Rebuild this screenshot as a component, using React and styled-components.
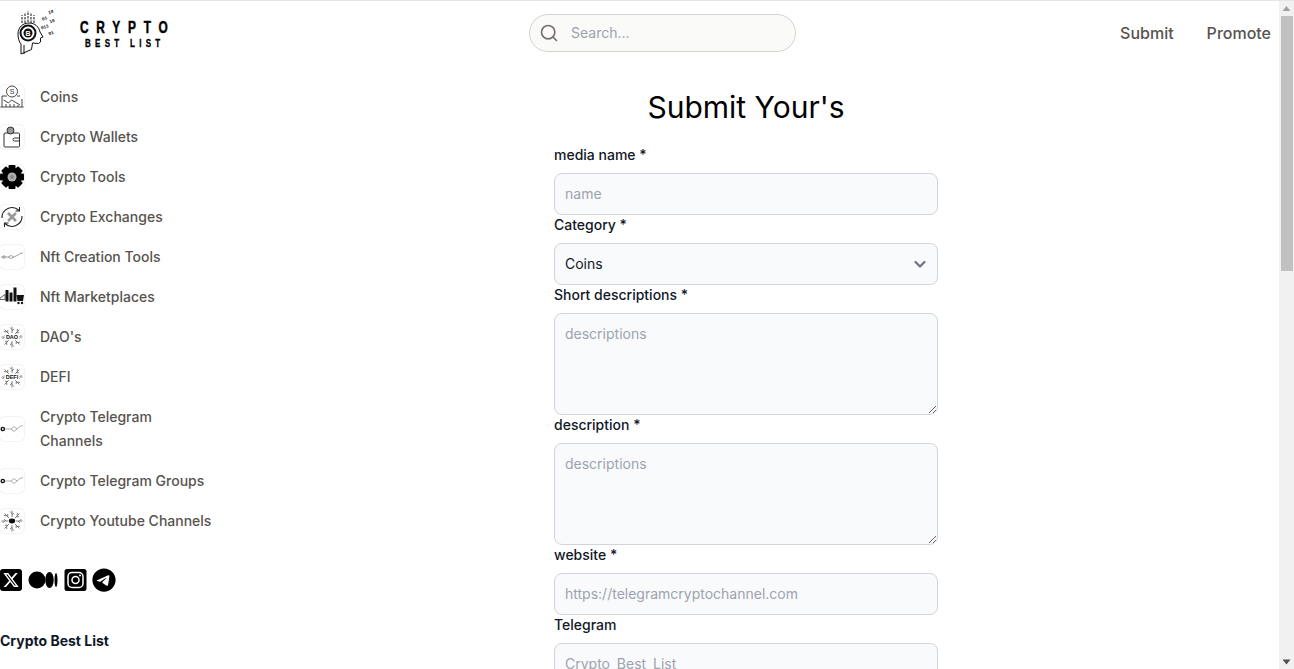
import React from 'react'
import styled, { createGlobalStyle } from 'styled-components'
import { Search } from 'lucide-react'
import { FaTelegram } from 'react-icons/fa6'

const chevron = `url("data:image/svg+xml,%3Csvg xmlns='http://www.w3.org/2000/svg' fill='none' viewBox='0 0 20 20'%3E%3Cpath stroke='%236b7280' stroke-linecap='round' stroke-linejoin='round' stroke-width='2.2' d='M5.500 8l4.500 4.500 4.500-4.500'/%3E%3C/svg%3E")`

const GlobalStyle = createGlobalStyle`
  * { box-sizing: border-box; }
  html, body { height: 100%; margin: 0; overflow: hidden; }
  body {
    border-top: 1px solid #e5e5e5;
    background: #fff;
    font-family: Inter, "Liberation Sans", sans-serif;
    font-size: 14px;
    line-height: 24px;
  }
  #root { height: 100%; }
`

const Shell = styled.div`
  display: flex;
  height: 100%;
`

const Content = styled.div`
  flex: 1;
  min-width: 0;
  overflow: hidden;
`

const ScrollBar = styled.div`
  flex: 0 0 15px;
  display: flex;
  flex-direction: column;
  background: #f1f1f1;
`

const ScrollArrow = styled.svg`
  display: block;
  flex: 0 0 15px;
  width: 15px;
  height: 15px;
  fill: ${p => p.$color};
`

const ScrollThumb = styled.div`
  flex: 0 0 255px;
  margin-left: 2px;
  margin-right: 1px;
  background: #c1c1c1;
`

const ScrollRest = styled.div`
  flex: 1;
`

const Header = styled.header`
  display: flex;
  align-items: center;
  justify-content: space-between;
  height: 64px;
  padding-right: 8px;
`

const LogoBox = styled.a`
  flex: 0 0 205px;
`

const LogoSvg = styled.svg`
  display: block;
  width: 170px;
  height: 50px;
`

const SearchBox = styled.label`
  display: flex;
  align-items: center;
  gap: 12px;
  width: 267px;
  height: 38px;
  padding: 0 12px 0 9px;
  border: 1px solid #d6d3d1;
  border-radius: 999px;
  background: #fafaf9;
  color: #78716c;

  input {
    flex: 1;
    min-width: 0;
    border: 0;
    outline: 0;
    padding: 0;
    background: transparent;
    font: inherit;
    color: #111827;
  }
  input::placeholder { color: #9ca3af; opacity: 1; }
`

const TopNav = styled.nav`
  display: flex;
  gap: 33px;
`

const TopLink = styled.a`
  font-size: 16px;
  font-weight: 500;
  color: #57534e;
`

const Columns = styled.div`
  display: flex;
  align-items: flex-start;
`

const Sidebar = styled.aside`
  flex: 0 0 213px;
  width: 213px;
  padding-top: 12px;
`

const NavItem = styled.a`
  display: flex;
  align-items: center;
  gap: 16px;
  padding: 8px 0;
  font-weight: 500;
  color: #57534e;
`

const Tile = styled.span`
  flex: 0 0 24px;
  width: 24px;
  height: 24px;
  border-radius: 5px;
  box-shadow: 0 0 0 1px #f3f3f3;
  background: #fff;

  svg { display: block; width: 24px; height: 24px; }
`

const Socials = styled.div`
  display: flex;
  align-items: center;
  gap: 4px;
  margin-top: 27px;
  color: #000;

  svg { display: block; }
`

const BrandName = styled.h4`
  margin: 37px 0 0;
  font-size: 14px;
  line-height: 24px;
  font-weight: 700;
  color: #111827;
`

const Main = styled.main`
  flex: 1;
  padding-top: 24px;
`

const Title = styled.h1`
  margin: 0 0 20px;
  font-size: 30px;
  line-height: 36px;
  font-weight: 400;
  text-align: center;
  color: #000;
`

const Form = styled.form`
  width: 384px;
  margin: 0 auto;
`

const Label = styled.label`
  display: block;
  margin-bottom: 8px;
  font-size: 14px;
  line-height: 20px;
  font-weight: 500;
  color: #111827;
`

const fieldCss = `
  display: block;
  width: 100%;
  padding: 10px;
  border: 1px solid #d1d5db;
  border-radius: 8px;
  background-color: #f9fafb;
  font: inherit;
  font-size: 14px;
  line-height: 20px;
  color: #111827;
  outline: 0;
  &::placeholder { color: #9ca3af; opacity: 1; }
`

const Input = styled.input`
  ${fieldCss}
  height: 42px;
  padding: 9px 10px 11px;
`

const Select = styled.select`
  ${fieldCss}
  height: 42px;
  appearance: none;
  background-image: ${chevron};
  background-repeat: no-repeat;
  background-position: right 7px center;
  background-size: 20px 20px;
`

const TextArea = styled.textarea`
  ${fieldCss}
  height: 102px;
`

const Strand = () => (
  <g fill="none" stroke="#8a8a8a" strokeWidth=".8">
    <path d="M1 12h7l3-1.500 3 1.500 4-2 2-1.500 3-.5" />
    <path d="M8 12l3 1.500 3-1.500" />
    <circle cx="4" cy="12" r="1.300" />
  </g>
)

const TelegramStrand = () => (
  <g fill="none" stroke="#9a9a9a" strokeWidth=".8">
    <path d="M5 12h6l3-2.500 3 2.500 3-2.500 3-1" />
    <path d="M11 12l3 2.500 3-2.500" />
    <circle cx="2.800" cy="12" r="1.600" stroke="#111" strokeWidth="1.400" />
  </g>
)

const Hub = ({ label, dark }) => (
  <g fill="none" stroke="#555" strokeWidth=".7">
    {[0, 45, 90, 135, 180, 225, 270, 315].map(a => (
      <path key={a} transform={`rotate(${a} 12 12)`} d="M12 8V1.500m0 3l-2-2m2 3.500l2-2" />
    ))}
    {dark ? (
      <ellipse cx="12" cy="12" rx="3.200" ry="2.400" fill="#111" stroke="none" />
    ) : (
      <>
        <rect x="4.500" y="8.800" width="15" height="6.400" fill="#fff" stroke="none" />
        <text x="12" y="14" fontSize="5.500" fontWeight="700" fill="#111" stroke="none" textAnchor="middle" fontFamily="Liberation Sans">{label}</text>
      </>
    )}
  </g>
)

const icons = {
  coins: (
    <g fill="none" stroke="#333" strokeWidth=".9">
      <circle cx="12" cy="6.500" r="5.500" />
      <text x="12" y="9" fontSize="7" fill="#333" stroke="none" textAnchor="middle" fontFamily="Liberation Sans">S</text>
      <path d="M.5 22h23M2 22V11h5M22 22v-8M17 11h3" />
      <path d="M3.500 15l5 3 3-3 3.500 2 5 3" />
      <path d="M6 22v-3M10 22v-3M14 22v-3M18 22v-2" />
    </g>
  ),
  wallet: (
    <g fill="none" stroke="#333" strokeWidth="1">
      <rect x="4" y="8" width="15.500" height="14" rx="1" />
      <circle cx="10.500" cy="5.500" r="3.500" fill="#999" />
      <path d="M19.500 13h-5a1.500 1.500 0 0 0 0 3h5" />
    </g>
  ),
  gear: (
    <g>
      {[0, 45, 90, 135].map(a => (
        <rect key={a} x="8.500" y="0" width="7" height="24" rx="1" fill="#000" transform={`rotate(${a} 12 12)`} />
      ))}
      <circle cx="12" cy="12" r="9.500" fill="#000" />
      <circle cx="12" cy="12" r="4.500" fill="#b0b0b0" />
      <circle cx="12" cy="12" r="2" fill="#8a8a8a" />
    </g>
  ),
  exchange: (
    <g fill="none" stroke="#222" strokeWidth="1.100">
      <path d="M2 13a10 10 0 0 1 17-7.500M22 11a10 10 0 0 1-17 7.500" />
      <path d="M19.500 2v4h-4M4.500 22v-4h4" />
      <path d="M8 8l8 8M16 8l-8 8" stroke="#999" strokeWidth="2.600" />
    </g>
  ),
  strand: <Strand />,
  market: (
    <g fill="#111">
      <path d="M0 13l5-3.500v5H0z" fill="none" stroke="#444" strokeWidth=".8" />
      <rect x="5.500" y="5" width="3" height="11.500" />
      <rect x="9.500" y="7.500" width="3" height="9" />
      <rect x="13.500" y="2.500" width="3" height="14" />
      <path d="M16.500 10h7.500l-1 6h-5.500z" />
      <circle cx="18.500" cy="18" r="1.200" />
      <circle cx="22" cy="18" r="1.200" />
    </g>
  ),
  dao: <Hub label="DAO" />,
  defi: <Hub label="DEFI" />,
  telegram: <TelegramStrand />,
  youtube: <Hub dark />,
}

const categories = [
  ['Coins', 'coins'],
  ['Crypto Wallets', 'wallet'],
  ['Crypto Tools', 'gear'],
  ['Crypto Exchanges', 'exchange'],
  ['Nft Creation Tools', 'strand'],
  ['Nft Marketplaces', 'market'],
  ["DAO's", 'dao'],
  ['DEFI', 'defi'],
  ['Crypto Telegram Channels', 'telegram'],
  ['Crypto Telegram Groups', 'telegram'],
  ['Crypto Youtube Channels', 'youtube'],
]

const Logo = () => (
  <LogoSvg viewBox="0 8 170 50">
    <g fill="none" stroke="#111" strokeWidth="1">
      <path d="M21 54V44c-2-2-3-6-3-10 0-7 5-11 11-11 6 0 10 4 11 9l3 5-2.500 1v4l-2 1.500-6-.5-1 6.500z" />
      <path d="M24 54V45" />
      <circle cx="28" cy="33" r="7.500" strokeWidth="2" />
      <path d="M22 23v-8M25 23V13M28 22V11M31 23V13M34 23v-8" strokeDasharray="2.500 1" />
    </g>
    <circle cx="28" cy="33" r="4.500" fill="#111" />
    <text x="28" y="35.500" fontSize="7" fontWeight="700" fill="#fff" textAnchor="middle" fontFamily="Liberation Sans">B</text>
    <g fontSize="4.500" fontWeight="700" fill="#222" fontFamily="Liberation Mono" transform="rotate(-20 48 24)">
      <text x="44" y="19">01</text>
      <text x="52" y="15">10</text>
      <text x="40" y="27">011</text>
      <text x="50" y="24">10</text>
      <text x="45" y="35">01</text>
    </g>
    <text transform="translate(80 33) scale(.72 1)" fontSize="16.500" fontWeight="700" fill="#000" stroke="#000" strokeWidth=".5" textLength="122" fontFamily="Liberation Sans">CRYPTO</text>
    <text transform="translate(85 47) scale(.8 1)" fontSize="10" fontWeight="700" fill="#000" stroke="#000" strokeWidth=".3" textLength="94" fontFamily="Liberation Sans">BEST LIST</text>
  </LogoSvg>
)

const XIcon = () => (
  <svg width="24" height="24" viewBox="0 0 24 24">
    <rect x="0" y="1" width="22" height="22" rx="3" />
    <path
      fill="#fff"
      transform="translate(2.500 3.500) scale(.71)"
      d="M18.244 2.250h3.308l-7.227 8.260 8.502 11.240H16.170l-5.214-6.817L4.990 21.750H1.680l7.730-8.835L1.254 2.250H8.080l4.713 6.231zm-1.161 17.520h1.833L7.084 4.126H5.117z"
    />
  </svg>
)

const MediumIcon = () => (
  <svg width="32" height="24" viewBox="0 0 32 24">
    <ellipse cx="9" cy="12" rx="8.500" ry="8.500" />
    <ellipse cx="21.500" cy="12" rx="4.200" ry="8" />
    <ellipse cx="28" cy="12" rx="1.500" ry="7" />
  </svg>
)

const InstagramIcon = () => (
  <svg width="24" height="24" viewBox="0 0 24 24">
    <rect x="0.500" y="1" width="22" height="22" rx="2.500" />
    <g fill="none" stroke="#fff" strokeWidth="1.500">
      <rect x="4" y="4.500" width="15" height="15" rx="4" />
      <circle cx="11.500" cy="12" r="3.500" />
    </g>
    <circle cx="16" cy="7.500" r="1" fill="#fff" />
  </svg>
)

const App = () => (
  <Shell>
    <GlobalStyle />
    <Content>
      <Header>
        <LogoBox>
          <Logo />
        </LogoBox>
        <SearchBox>
          <Search size={20} strokeWidth={2} />
          <input placeholder="Search..." />
        </SearchBox>
        <TopNav>
          <TopLink>Submit</TopLink>
          <TopLink>Promote</TopLink>
        </TopNav>
      </Header>
      <Columns>
        <Sidebar>
          {categories.map(([name, icon]) => (
            <NavItem key={name}>
              <Tile>
                <svg viewBox="0 0 24 24">{icons[icon]}</svg>
              </Tile>
              <span>{name}</span>
            </NavItem>
          ))}
          <Socials>
            <XIcon />
            <MediumIcon />
            <InstagramIcon />
            <FaTelegram size={24} />
          </Socials>
          <BrandName>Crypto Best List</BrandName>
        </Sidebar>
        <Main>
          <Title>Submit Your's</Title>
          <Form>
            <Label>media name *</Label>
            <Input placeholder="name" />
            <Label>Category *</Label>
            <Select defaultValue="Coins">
              {categories.map(([name]) => (
                <option key={name}>{name}</option>
              ))}
            </Select>
            <Label>Short descriptions *</Label>
            <TextArea placeholder="descriptions" />
            <Label>description *</Label>
            <TextArea placeholder="descriptions" />
            <Label>website *</Label>
            <Input placeholder="https://telegramcryptochannel.com" />
            <Label>Telegram</Label>
            <Input placeholder="Crypto_Best_List" />
          </Form>
        </Main>
      </Columns>
    </Content>
    <ScrollBar>
      <ScrollArrow $color="#a3a3a3" viewBox="0 0 15 15">
        <path d="M7.500 5L11.500 10h-8z" />
      </ScrollArrow>
      <ScrollThumb />
      <ScrollRest />
      <ScrollArrow $color="#505050" viewBox="0 0 15 15">
        <path d="M3.500 5.500h8L7.500 10.500z" />
      </ScrollArrow>
    </ScrollBar>
  </Shell>
)

export default App
